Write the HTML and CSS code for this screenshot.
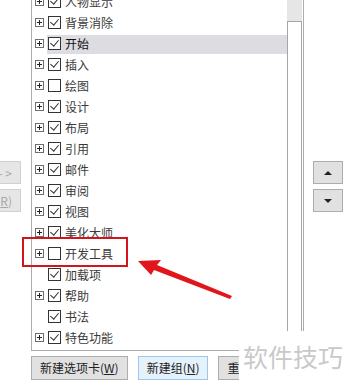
FILE: index.html
```html
<!DOCTYPE html>
<html lang="zh-CN">
  <head>
    <meta charset="UTF-8" />
    <meta name="viewport" content="width=device-width, initial-scale=1.0" />
    <title>自定义功能区</title>
    <link rel="stylesheet" href="styles.css">
  </head>
  <body>
    <div class="dialog">
      <div class="main">
        <!-- 左侧添加/删除按钮（被裁切） -->
        <div class="side-left">
          <button class="btn btn-off">添加(A) - &gt;</button>
          <button class="btn btn-off">&lt;&lt; 删除(<u>R</u>)</button>
        </div>

        <!-- 主选项卡列表 -->
        <div class="tree">
          <ul class="rows">
            <li class="row"><span class="exp"></span><span class="chk on"></span>人物显示</li>
            <li class="row"><span class="exp"></span><span class="chk on"></span>背景消除</li>
            <li class="row selected"><span class="exp"></span><span class="chk on"></span>开始</li>
            <li class="row"><span class="exp"></span><span class="chk on"></span>插入</li>
            <li class="row"><span class="exp"></span><span class="chk"></span>绘图</li>
            <li class="row"><span class="exp"></span><span class="chk on"></span>设计</li>
            <li class="row"><span class="exp"></span><span class="chk on"></span>布局</li>
            <li class="row"><span class="exp"></span><span class="chk on"></span>引用</li>
            <li class="row"><span class="exp"></span><span class="chk on"></span>邮件</li>
            <li class="row"><span class="exp"></span><span class="chk on"></span>审阅</li>
            <li class="row"><span class="exp"></span><span class="chk on"></span>视图</li>
            <li class="row"><span class="exp"></span><span class="chk on"></span>美化大师</li>
            <li class="row"><span class="exp"></span><span class="chk"></span>开发工具</li>
            <li class="row"><span class="exp none"></span><span class="chk on"></span>加载项</li>
            <li class="row"><span class="exp"></span><span class="chk on"></span>帮助</li>
            <li class="row"><span class="exp none"></span><span class="chk on"></span>书法</li>
            <li class="row"><span class="exp"></span><span class="chk on"></span>特色功能</li>
          </ul>
          <div class="scrollbar">
            <div class="track"></div>
            <div class="thumb"></div>
          </div>
        </div>

        <!-- 上移/下移 -->
        <div class="side-right">
          <button class="btn btn-arrow"><span class="tri up"></span></button>
          <button class="btn btn-arrow"><span class="tri down"></span></button>
        </div>
      </div>

      <div class="bottom">
        <button class="btn">新建选项卡(<u>W</u>)</button>
        <button class="btn btn-focus">新建组(<u>N</u>)</button>
        <button class="btn">重命名(<u>M</u>)...</button>
      </div>
    </div>

    <!-- 标注：红框和箭头 -->
    <div class="mark-box"></div>
    <svg class="mark-arrow" width="343" height="382" viewBox="0 0 343 382">
      <polygon points="138,261 161,260 157,265 232,296 230,299 154,270 151,275" fill="#e0161b" />
    </svg>

    <div class="watermark">软件技巧</div>
  </body>
</html>
```

FILE: styles.css
```css
/* 整体 */
body {
  margin: 0;
  width: 343px;
  height: 382px;
  overflow: hidden;
  background: #fff;
  font-family: 'Microsoft YaHei', 'Noto Sans CJK SC', sans-serif;
  font-size: 12px;
  color: #333;
}

.dialog {
  display: flex;
  flex-direction: column;
}

.main {
  display: flex;
  height: 351px;
}

/* 按钮 */
.btn {
  font-family: inherit;
  font-size: 12px;
  color: #222;
  height: 23px;
  padding: 0 8px;
  background: #e1e1e1;
  border: 1px solid #adadad;
  white-space: nowrap;
  line-height: 20px;
}

.btn-off {
  color: #a8a8a8;
  background: #e6e6e6;
  border-color: #d0d0d0;
}

.btn-focus {
  background: #e5f1fb;
  border-color: #9cc6ea;
}

/* 左侧按钮列 */
.side-left {
  width: 21px;
  margin-right: 10px;
  overflow: hidden;
  display: flex;
  flex-direction: column;
  align-items: flex-end;
  gap: 5px;
  padding-top: 161px;
  flex-shrink: 0;
}

.side-left .btn {
  width: 90px;
  flex-shrink: 0;
  text-align: right;
  padding-right: 8px;
}

/* 树形列表 */
.tree {
  width: 271px;
  flex-shrink: 0;
  border: 1px solid #acacac;
  border-top: none;
  display: flex;
  overflow: hidden;
  background: #fff;
}

.rows {
  list-style: none;
  margin: -9px 0 0;
  padding: 0;
  flex: 1;
}

.row {
  height: 21px;
  display: flex;
  align-items: center;
  padding-left: 3px;
  color: #3a3a3a;
}

.row.selected {
  color: #111;
  background: linear-gradient(to right, transparent 15px, #dcdce1 15px);
  background-position: 0 2px;
  background-repeat: no-repeat;
}

/* 展开框 */
.exp {
  width: 7px;
  height: 7px;
  border: 1px solid #6d6d6d;
  position: relative;
  margin-right: 4px;
  flex-shrink: 0;
}

.exp::before,
.exp::after {
  content: '';
  position: absolute;
  background: #222;
}

.exp::before {
  left: 1px;
  top: 3px;
  width: 5px;
  height: 1px;
}

.exp::after {
  left: 3px;
  top: 1px;
  width: 1px;
  height: 5px;
}

.exp.none {
  border-color: transparent;
}

.exp.none::before,
.exp.none::after {
  display: none;
}

/* 复选框 */
.chk {
  width: 11px;
  height: 11px;
  border: 1px solid #333;
  background: #fff;
  margin-right: 4px;
  flex-shrink: 0;
  position: relative;
}

.chk.on::after {
  content: '';
  position: absolute;
  left: 3px;
  top: 0px;
  width: 4px;
  height: 7px;
  border-right: 1px solid #333;
  border-bottom: 1px solid #333;
  transform: rotate(40deg);
}

/* 滚动条 */
.scrollbar {
  width: 15px;
  margin-right: 1px;
  display: flex;
  flex-direction: column;
}

.track {
  height: 21px;
  background: #e6e6e6;
}

.thumb {
  flex: 1;
  border: 1px solid #a6a6a6;
  border-bottom: none;
  background: #fff;
}

/* 右侧上下移动 */
.side-right {
  margin-left: 9px;
  width: 30px;
  display: flex;
  flex-direction: column;
  gap: 5px;
  padding-top: 161px;
}

.btn-arrow {
  width: 30px;
  padding: 0;
  display: flex;
  align-items: center;
  justify-content: center;
}

.tri {
  width: 0;
  height: 0;
  border-left: 4px solid transparent;
  border-right: 4px solid transparent;
}

.tri.up {
  border-bottom: 4px solid #222;
}

.tri.down {
  border-top: 4px solid #222;
}

/* 底部按钮 */
.bottom {
  display: flex;
  gap: 10px;
  padding-left: 31px;
  margin-top: 5px;
}

.bottom .btn {
  height: 24px;
}

/* 标注 */
.mark-box {
  position: absolute;
  left: 22px;
  top: 237px;
  width: 102px;
  height: 26px;
  border: 2px solid #d2151a;
}

.mark-arrow {
  position: absolute;
  left: 0;
  top: 0;
}

/* 水印 */
.watermark {
  position: absolute;
  left: 239px;
  top: 331px;
  width: 104px;
  height: 51px;
  background: #fff;
  color: #c9c9c9;
  font-size: 25px;
  line-height: 51px;
  padding-left: 4px;
  white-space: nowrap;
  box-sizing: border-box;
}
```
